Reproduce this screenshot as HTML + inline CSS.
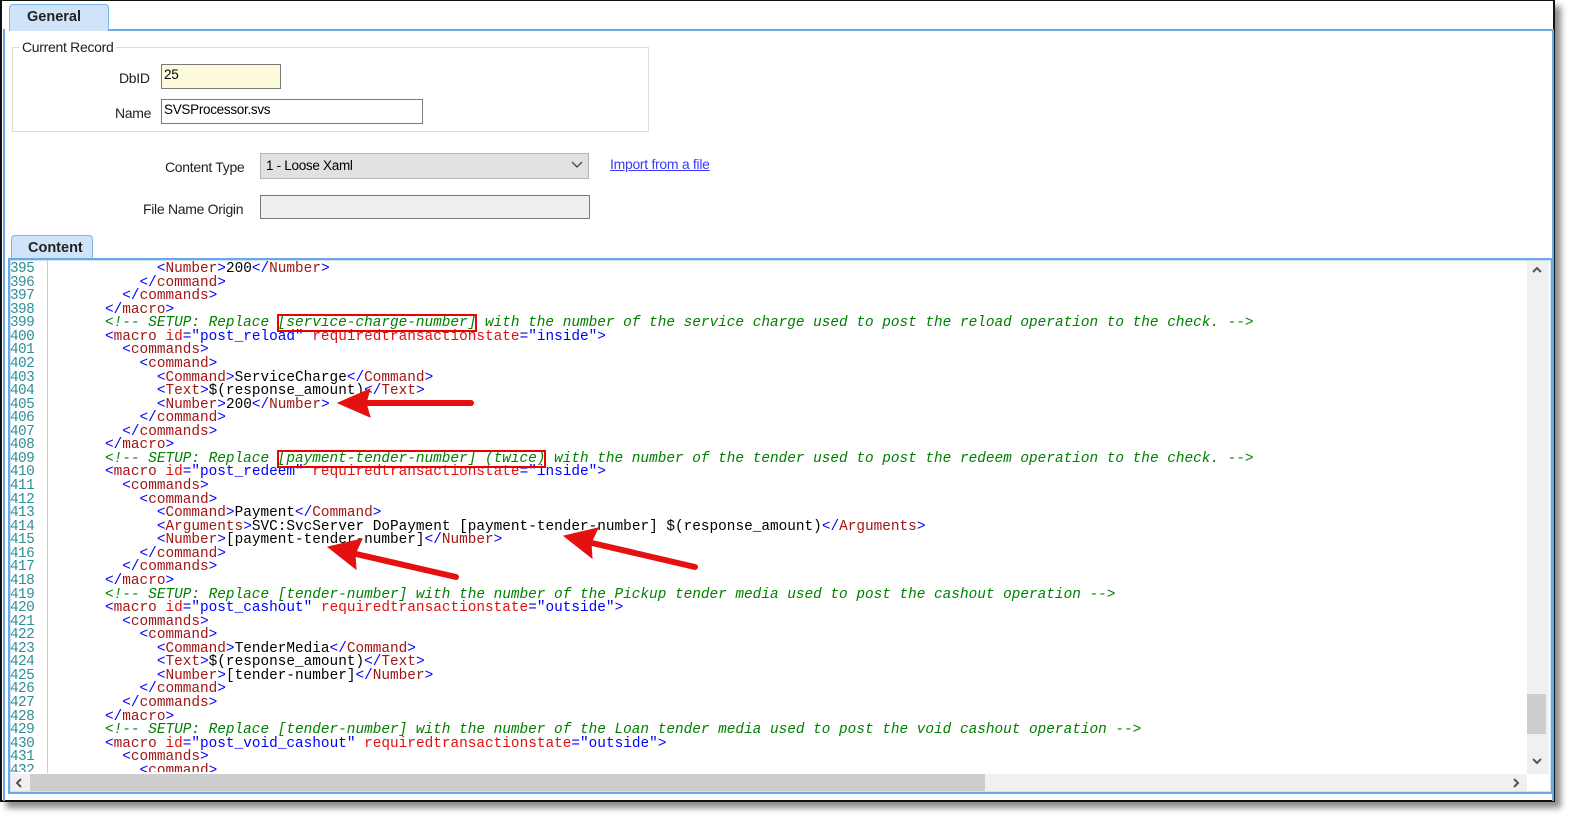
<!DOCTYPE html>
<html><head><meta charset="utf-8"><style>
*{margin:0;padding:0;box-sizing:border-box}
body{width:1587px;height:825px;background:#fff;position:relative;overflow:hidden;font-family:"Liberation Sans",sans-serif;font-size:14px;color:#000}
.win{position:absolute;left:0;top:0;width:1555px;height:802px;border:2px solid #111;border-top:1px solid #111;background:#fff;box-shadow:6px 6px 6px rgba(0,0,0,.45)}
.abs{position:absolute}
.tab{position:absolute;background:#cfe4f8;border:1px solid #7fb4ea;border-bottom:none;border-radius:4px 4px 0 0;font-weight:bold;font-size:14.5px;color:#222;padding-left:17px}
.lbl{position:absolute;font-size:14px;color:#222;letter-spacing:-.3px}
.box{position:absolute;border:1px solid #7a7a7a;font-size:13.5px;padding-left:2px;letter-spacing:-.3px}
.code{position:absolute;font-family:"Liberation Mono",monospace;font-size:14.4px;line-height:13.57px;white-space:pre;color:#000}
.nums{position:absolute;font-family:"Liberation Mono",monospace;font-size:14.4px;line-height:13.57px;white-space:pre;color:#2e8f96;letter-spacing:-0.6px}
.b{color:#0000ff}.t{color:#a31515}.a{color:#e01010}.v{color:#0000ff}.c{color:#008000;font-style:italic}
.rb{outline:2px solid #e00;outline-offset:-1px}
</style></head><body>
<div class="win">
  <div class="tab" style="left:7px;top:3px;width:100px;height:27px;line-height:25px">General</div>
  <div class="abs" style="left:106px;top:28px;width:1446px;height:2px;background:#6aa8ea"></div>
  <div class="abs" style="left:1px;top:28px;width:2px;height:772px;background:#6aa8ea"></div>
  <div class="abs" style="left:1550px;top:28px;width:2px;height:772px;background:#6aa8ea"></div>
  <div class="abs" style="left:10px;top:46px;width:637px;height:85px;border:1px solid #dcdcdc"></div>
  <div class="lbl" style="left:18px;top:38px;background:#fff;padding:0 2px">Current Record</div>
  <div class="lbl" style="left:117px;top:69px">DbID</div>
  <div class="box" style="left:159px;top:63px;width:120px;height:25px;background:#fdfbdc;line-height:20px">25</div>
  <div class="lbl" style="left:113px;top:104px">Name</div>
  <div class="box" style="left:159px;top:98px;width:262px;height:25px;line-height:20px">SVSProcessor.svs</div>
  <div class="lbl" style="left:163px;top:158px">Content Type</div>
  <div class="box" style="left:258px;top:152px;width:329px;height:26px;background:#e1e1e1;border-color:#b4b4b4;line-height:24px;padding-left:5px">1 - Loose Xaml</div>
  <svg class="abs" style="left:569px;top:160px" width="12" height="8"><path d="M1 1 L6 6 L11 1" fill="none" stroke="#444" stroke-width="1.3"/></svg>
  <div class="abs" style="left:608px;top:155px;font-size:14px;color:#3a3aff;text-decoration:underline;letter-spacing:-.3px">Import from a file</div>
  <div class="lbl" style="left:141px;top:200px">File Name Origin</div>
  <div class="box" style="left:258px;top:194px;width:330px;height:24px;background:#efefef"></div>
  <div class="tab" style="left:9px;top:234px;width:82px;height:25px;line-height:24px;padding-left:16px">Content</div>
  <div class="abs" style="left:6px;top:257px;width:1545px;height:536px;border:2px solid #6aa8ea"></div>
  <div class="abs" style="left:8px;top:259px;width:1541px;height:532px;border:1px solid #cfe3f6"></div>
  <div class="abs" style="left:45px;top:259px;width:1px;height:513px;background:#ccc"></div>
  <div class="abs" style="left:1525px;top:260px;width:22px;height:513px;background:#f0f0f0"></div>
  <div class="abs" style="left:1525px;top:693px;width:19px;height:40px;background:#cdcdcd"></div>
  <svg class="abs" style="left:1529px;top:265px" width="12" height="8"><path d="M2 6 L6 2 L10 6" fill="none" stroke="#555" stroke-width="2"/></svg>
  <svg class="abs" style="left:1529px;top:756px" width="12" height="8"><path d="M2 2 L6 6 L10 2" fill="none" stroke="#555" stroke-width="2"/></svg>
  <div class="abs" style="left:9px;top:773px;width:1516px;height:17px;background:#f0f0f0"></div>
  <div class="abs" style="left:28px;top:773px;width:955px;height:17px;background:#cdcdcd"></div>
  <svg class="abs" style="left:13px;top:776px" width="8" height="12"><path d="M6 2 L2 6 L6 10" fill="none" stroke="#555" stroke-width="2"/></svg>
  <svg class="abs" style="left:1510px;top:776px" width="8" height="12"><path d="M2 2 L6 6 L2 10" fill="none" stroke="#555" stroke-width="2"/></svg>
</div>
<div style="position:absolute;left:8px;top:259px;width:1515px;height:513px;overflow:hidden">
<div class="nums" style="left:2px;top:4px">395
396
397
398
399
400
401
402
403
404
405
406
407
408
409
410
411
412
413
414
415
416
417
418
419
420
421
422
423
424
425
426
427
428
429
430
431
432</div>
<div class="code" style="left:97px;top:4px">      <span class="b">&lt;</span><span class="t">Number</span><span class="b">&gt;</span>200<span class="b">&lt;/</span><span class="t">Number</span><span class="b">&gt;</span>
    <span class="b">&lt;/</span><span class="t">command</span><span class="b">&gt;</span>
  <span class="b">&lt;/</span><span class="t">commands</span><span class="b">&gt;</span>
<span class="b">&lt;/</span><span class="t">macro</span><span class="b">&gt;</span>
<span class="c">&lt;!-- SETUP: Replace <span class="rb">[service-charge-number]</span> with the number of the service charge used to post the reload operation to the check. --&gt;</span>
<span class="b">&lt;</span><span class="t">macro</span> <span class="a">id</span><span class="b">=</span><span class="v">"post_reload"</span> <span class="a">requiredtransactionstate</span><span class="b">=</span><span class="v">"inside"</span><span class="b">&gt;</span>
  <span class="b">&lt;</span><span class="t">commands</span><span class="b">&gt;</span>
    <span class="b">&lt;</span><span class="t">command</span><span class="b">&gt;</span>
      <span class="b">&lt;</span><span class="t">Command</span><span class="b">&gt;</span>ServiceCharge<span class="b">&lt;/</span><span class="t">Command</span><span class="b">&gt;</span>
      <span class="b">&lt;</span><span class="t">Text</span><span class="b">&gt;</span>$(response_amount)<span class="b">&lt;/</span><span class="t">Text</span><span class="b">&gt;</span>
      <span class="b">&lt;</span><span class="t">Number</span><span class="b">&gt;</span>200<span class="b">&lt;/</span><span class="t">Number</span><span class="b">&gt;</span>
    <span class="b">&lt;/</span><span class="t">command</span><span class="b">&gt;</span>
  <span class="b">&lt;/</span><span class="t">commands</span><span class="b">&gt;</span>
<span class="b">&lt;/</span><span class="t">macro</span><span class="b">&gt;</span>
<span class="c">&lt;!-- SETUP: Replace <span class="rb">[payment-tender-number] (twice)</span> with the number of the tender used to post the redeem operation to the check. --&gt;</span>
<span class="b">&lt;</span><span class="t">macro</span> <span class="a">id</span><span class="b">=</span><span class="v">"post_redeem"</span> <span class="a">requiredtransactionstate</span><span class="b">=</span><span class="v">"inside"</span><span class="b">&gt;</span>
  <span class="b">&lt;</span><span class="t">commands</span><span class="b">&gt;</span>
    <span class="b">&lt;</span><span class="t">command</span><span class="b">&gt;</span>
      <span class="b">&lt;</span><span class="t">Command</span><span class="b">&gt;</span>Payment<span class="b">&lt;/</span><span class="t">Command</span><span class="b">&gt;</span>
      <span class="b">&lt;</span><span class="t">Arguments</span><span class="b">&gt;</span>SVC:SvcServer DoPayment [payment-tender-number] $(response_amount)<span class="b">&lt;/</span><span class="t">Arguments</span><span class="b">&gt;</span>
      <span class="b">&lt;</span><span class="t">Number</span><span class="b">&gt;</span>[payment-tender-number]<span class="b">&lt;/</span><span class="t">Number</span><span class="b">&gt;</span>
    <span class="b">&lt;/</span><span class="t">command</span><span class="b">&gt;</span>
  <span class="b">&lt;/</span><span class="t">commands</span><span class="b">&gt;</span>
<span class="b">&lt;/</span><span class="t">macro</span><span class="b">&gt;</span>
<span class="c">&lt;!-- SETUP: Replace [tender-number] with the number of the Pickup tender media used to post the cashout operation --&gt;</span>
<span class="b">&lt;</span><span class="t">macro</span> <span class="a">id</span><span class="b">=</span><span class="v">"post_cashout"</span> <span class="a">requiredtransactionstate</span><span class="b">=</span><span class="v">"outside"</span><span class="b">&gt;</span>
  <span class="b">&lt;</span><span class="t">commands</span><span class="b">&gt;</span>
    <span class="b">&lt;</span><span class="t">command</span><span class="b">&gt;</span>
      <span class="b">&lt;</span><span class="t">Command</span><span class="b">&gt;</span>TenderMedia<span class="b">&lt;/</span><span class="t">Command</span><span class="b">&gt;</span>
      <span class="b">&lt;</span><span class="t">Text</span><span class="b">&gt;</span>$(response_amount)<span class="b">&lt;/</span><span class="t">Text</span><span class="b">&gt;</span>
      <span class="b">&lt;</span><span class="t">Number</span><span class="b">&gt;</span>[tender-number]<span class="b">&lt;/</span><span class="t">Number</span><span class="b">&gt;</span>
    <span class="b">&lt;/</span><span class="t">command</span><span class="b">&gt;</span>
  <span class="b">&lt;/</span><span class="t">commands</span><span class="b">&gt;</span>
<span class="b">&lt;/</span><span class="t">macro</span><span class="b">&gt;</span>
<span class="c">&lt;!-- SETUP: Replace [tender-number] with the number of the Loan tender media used to post the void cashout operation --&gt;</span>
<span class="b">&lt;</span><span class="t">macro</span> <span class="a">id</span><span class="b">=</span><span class="v">"post_void_cashout"</span> <span class="a">requiredtransactionstate</span><span class="b">=</span><span class="v">"outside"</span><span class="b">&gt;</span>
  <span class="b">&lt;</span><span class="t">commands</span><span class="b">&gt;</span>
    <span class="b">&lt;</span><span class="t">command</span><span class="b">&gt;</span></div>
</div>
<svg class="abs" style="left:0;top:0" width="1587" height="825">
  <g fill="#e51010" stroke="#e51010" stroke-linecap="round">
    <line x1="365" y1="403" x2="471" y2="403" stroke-width="6"/>
    <polygon points="338,403 370,389 366,403 370,417" stroke-width="1"/>
    <line x1="356" y1="554" x2="456" y2="577" stroke-width="6"/>
    <polygon points="328,547 362,539 355,554 356,569" stroke-width="1"/>
    <line x1="592" y1="543" x2="695" y2="567" stroke-width="6"/>
    <polygon points="564,536 598,528 591,543 592,558" stroke-width="1"/>
  </g>
</svg>
</body></html>
